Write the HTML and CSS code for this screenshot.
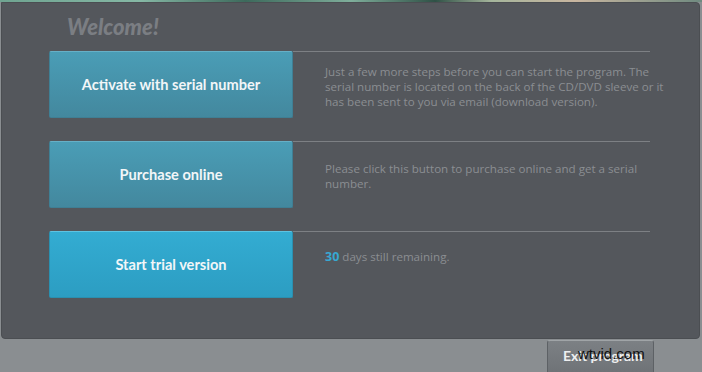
FILE: index.html
```html
<!DOCTYPE html>
<html lang="en">
<head>
    <meta charset="UTF-8">
    <meta name="viewport" content="width=device-width, initial-scale=1.0">
    <title>Welcome</title>
    <link rel="stylesheet" href="styles.css">
</head>
<body>
    <div class="backdrop"></div>

    <div class="panel">
        <h1 class="welcome">Welcome!</h1>

        <div class="option">
            <button class="option-btn">Activate with serial number</button>
            <div class="option-info info-1">
                <p>Just a few more steps before you can start the program. The serial number is located on the back of the CD/DVD sleeve or it has been sent to you via email (download version).</p>
            </div>
        </div>

        <div class="option">
            <button class="option-btn">Purchase online</button>
            <div class="option-info info-2">
                <p>Please click this button to purchase online and get a serial number.</p>
            </div>
        </div>

        <div class="option">
            <button class="option-btn trial">Start trial version</button>
            <div class="option-info info-3">
                <p><span class="days">30</span> days still remaining.</p>
            </div>
        </div>
    </div>

    <div class="footer">
        <button class="exit-btn">Exit program</button>
        <span class="watermark">wtvid.com</span>
    </div>
</body>
</html>
```

FILE: styles.css
```css
/* Global Styles */
body {
    margin: 0;
    background-color: #8a8e91;
    font-family: "Open Sans", Arial, sans-serif;
    overflow: hidden;
}

/* Background image peeking over the top */
.backdrop {
    height: 2px;
    background: linear-gradient(to right, #6fa491 0%, #86b8a5 20%, #3d6a5c 35%, #7fae9b 50%, #2f5146 62%, #a5b59c 70%, #c9b6a0 82%, #6f8a80 100%);
}

/* Panel */
.panel {
    margin: 0 2px 0 1px;
    height: 337px;
    box-sizing: border-box;
    background-color: #54575c;
    border: 1px solid #4b4e52;
    border-radius: 0 4px 4px 4px;
    padding: 12px 0 0 47px;
}

.welcome {
    margin: 0 0 12px 18px;
    font-family: Lato, "Open Sans", sans-serif;
    font-size: 22px;
    font-style: italic;
    font-weight: 900;
    color: #7b7e83;
    line-height: 24px;
}

/* Option rows */
.option {
    display: flex;
    height: 67px;
    margin-bottom: 23px;
}

.option-btn {
    width: 244px;
    height: 67px;
    flex: none;
    border: 1px solid #3f7f94;
    border-top-color: #66b0c7;
    border-radius: 2px;
    background: linear-gradient(to bottom, #4a9db6, #43889e);
    color: #f2f6f8;
    font-family: Lato, "Open Sans", sans-serif;
    font-size: 14.6px;
    font-weight: 700;
    cursor: pointer;
}

.option-btn.trial {
    border-color: #2a90b0;
    border-top-color: #5dc3e2;
    background: linear-gradient(to bottom, #33acd2, #2c9dc2);
}

.option-info {
    width: 357px;
    border-top: 1px solid #7d8084;
    padding-left: 32px;
    box-sizing: border-box;
}

.option-info p {
    margin: 0 -18px 0 0;
    font-size: 11.6px;
    line-height: 15px;
    color: #8b8e92;
}

.info-1 { padding-top: 12px; }
.info-2 { padding-top: 19px; }
.info-3 { padding-top: 17px; }

.days {
    color: #37a8d2;
    font-weight: 700;
    font-size: 12.5px;
}

/* Footer */
.footer {
    position: relative;
    height: 33px;
}

.exit-btn {
    position: absolute;
    left: 547px;
    top: 1px;
    width: 107px;
    height: 36px;
    border: 1px solid #5d6165;
    border-top-color: #a0a4a7;
    border-radius: 3px;
    background: linear-gradient(to bottom, #7c8084, #6e7276);
    color: #eeeff0;
    font-family: Lato, "Open Sans", sans-serif;
    font-size: 14px;
    font-weight: 700;
    text-align: left;
    padding: 0 0 6px 15px;
}

.watermark {
    position: absolute;
    left: 578px;
    top: 6px;
    font-family: "Liberation Sans", Arial, sans-serif;
    font-size: 15px;
    color: #111;
}
```
